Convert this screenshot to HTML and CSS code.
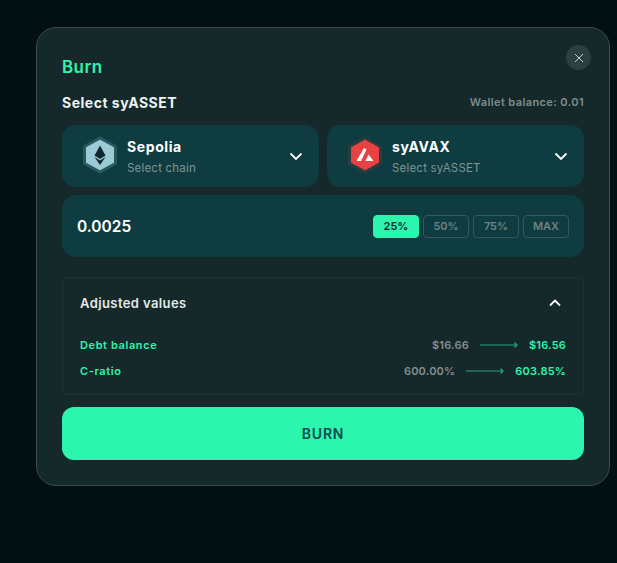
FILE: index.html
```html
<!DOCTYPE html>
<html lang="en">
<head>
	<meta charset="utf-8">
	<title>Burn</title>
	<link rel="stylesheet" href="styles.css">
</head>
<body>
	<div class="modal">
		<button class="close" type="button">
			<svg width="10" height="10" viewBox="0 0 10 10"><path d="M1 1l8 8M9 1l-8 8" stroke="#c5cdcd" stroke-width="1" fill="none"/></svg>
		</button>
		<h1 class="title">Burn</h1>

		<div class="label_row">
			<span class="label">Select syASSET</span>
			<span class="wallet">Wallet balance: 0.01</span>
		</div>

		<div class="selects">
			<div class="select">
				<svg class="token" width="36" height="38" viewBox="0 0 36 38">
					<path d="M18 2L33.500 10.500V27.500L18 36L2.500 27.500V10.500Z" fill="#9ccbd8" stroke="#2a565d" stroke-width="3" stroke-linejoin="round"/>
					<path d="M18 9.500L12.500 19.500L18 23L23.500 19.500Z" fill="#10272d"/>
					<path d="M12.500 21L18 24.500L23.500 21L18 29Z" fill="#10272d"/>
				</svg>
				<div class="select_text">
					<div class="select_name">Sepolia</div>
					<div class="select_hint">Select chain</div>
				</div>
				<svg class="chev" width="14" height="9" viewBox="0 0 14 9"><path d="M1.500 1.500L7 7L12.500 1.500" stroke="#fff" stroke-width="1.800" fill="none"/></svg>
			</div>
			<div class="select">
				<svg class="token" width="36" height="38" viewBox="0 0 36 38">
					<path d="M18 2L33.500 10.500V27.500L18 36L2.500 27.500V10.500Z" fill="#e84142" stroke="#2b3b40" stroke-width="3" stroke-linejoin="round"/>
					<path d="M17 12L19.500 13.500L14 25H9.500Z" fill="#fff"/>
					<path d="M21.500 18.500L26.500 25H18.500Z" fill="#fff"/>
				</svg>
				<div class="select_text">
					<div class="select_name">syAVAX</div>
					<div class="select_hint">Select syASSET</div>
				</div>
				<svg class="chev" width="14" height="9" viewBox="0 0 14 9"><path d="M1.500 1.500L7 7L12.500 1.500" stroke="#fff" stroke-width="1.800" fill="none"/></svg>
			</div>
		</div>

		<div class="amount">
			<span class="amount_value">0.0025</span>
			<div class="pcts">
				<span class="pct on">25%</span>
				<span class="pct">50%</span>
				<span class="pct">75%</span>
				<span class="pct">MAX</span>
			</div>
		</div>

		<div class="adjusted">
			<div class="adjusted_head">
				<span>Adjusted values</span>
				<svg width="12" height="8" viewBox="0 0 12 8"><path d="M1 6.500L6 1.500L11 6.500" stroke="#fff" stroke-width="1.800" fill="none"/></svg>
			</div>
			<div class="row">
				<span class="row_name">Debt balance</span>
				<span class="row_old">$16.66</span>
				<svg class="arrow" width="38" height="6" viewBox="0 0 38 6"><path d="M0 3H37M34.500 .5L37 3L34.500 5.500" stroke="#22a884" stroke-width="1.200" fill="none"/></svg>
				<span class="row_new">$16.56</span>
			</div>
			<div class="row">
				<span class="row_name">C-ratio</span>
				<span class="row_old">600.00%</span>
				<svg class="arrow" width="38" height="6" viewBox="0 0 38 6"><path d="M0 3H37M34.500 .5L37 3L34.500 5.500" stroke="#22a884" stroke-width="1.200" fill="none"/></svg>
				<span class="row_new">603.85%</span>
			</div>
		</div>

		<button class="burn" type="button">BURN</button>
	</div>
</body>
</html>
```

FILE: styles.css
```css
* {
	box-sizing: border-box;
}
html, body {
	height: 100%;
}
body {
	margin: 0;
	padding: 27px 0 0 36px;
	background: #021011;
	font-family: "Inter", "Liberation Sans", sans-serif;
	overflow: hidden;
}
.modal {
	position: relative;
	width: 574px;
	height: 459px;
	padding: 28px 25px 0 25px;
	background: #15292b;
	border: 1px solid #3a4b4c;
	border-radius: 20px;
}
.close {
	position: absolute;
	top: 17px;
	right: 18px;
	width: 25px;
	height: 25px;
	padding: 0;
	display: flex;
	align-items: center;
	justify-content: center;
	background: #2c3f42;
	border: 0;
	border-radius: 50%;
}
.title {
	margin: 0;
	height: 22px;
	line-height: 22px;
	font-size: 17px;
	font-weight: 600;
	letter-spacing: .4px;
	color: #2cf5ad;
}
.label_row {
	display: flex;
	justify-content: space-between;
	align-items: center;
	margin-top: 14px;
	height: 20px;
}
.label {
	font-size: 14px;
	font-weight: 700;
	letter-spacing: .5px;
	color: #eef3f3;
}
.wallet {
	font-size: 11px;
	font-weight: 600;
	letter-spacing: .4px;
	color: #7f8d8d;
}
.selects {
	display: flex;
	gap: 8px;
	margin-top: 13px;
}
.select {
	flex: 1;
	height: 62px;
	display: flex;
	align-items: center;
	padding: 0 16px 0 20px;
	background: #0f3c40;
	border-radius: 14px;
}
.token {
	flex: none;
	margin-top: -2px;
}
.select_text {
	flex: 1;
	margin-left: 9px;
}
.select_name {
	font-size: 14px;
	line-height: 18px;
	font-weight: 700;
	letter-spacing: .6px;
	color: #fff;
}
.select_hint {
	margin-top: 5px;
	font-size: 11.500px;
	line-height: 14px;
	letter-spacing: .2px;
	color: #7c9596;
}
.amount {
	display: flex;
	justify-content: space-between;
	align-items: center;
	height: 62px;
	margin-top: 8px;
	padding: 0 15px;
	background: #0f3c40;
	border-radius: 14px;
}
.amount_value {
	font-size: 15.500px;
	font-weight: 600;
	color: #fff;
}
.pcts {
	display: flex;
	gap: 4px;
}
.pct {
	width: 46px;
	height: 23px;
	line-height: 21px;
	text-align: center;
	font-size: 11px;
	font-weight: 600;
	color: #6b8384;
	border: 1px solid #37585a;
	border-radius: 4px;
}
.pct.on {
	background: #2cf5ad;
	border-color: #2cf5ad;
	color: #10292b;
}
.adjusted {
	height: 118px;
	margin-top: 20px;
	padding: 0 17px;
	border: 1px solid #1f3431;
	border-radius: 6px;
}
.adjusted_head {
	display: flex;
	justify-content: space-between;
	align-items: center;
	height: 50px;
	margin-bottom: 4px;
	padding-right: 5px;
	font-size: 13px;
	font-weight: 600;
	letter-spacing: .4px;
	color: #e3eaea;
}
.row {
	display: flex;
	align-items: center;
	height: 26px;
	font-size: 11px;
	font-weight: 600;
	letter-spacing: .2px;
}
.row_name {
	flex: 1;
	letter-spacing: .6px;
	color: #2cf5ad;
}
.row_old {
	color: #848f8f;
}
.arrow {
	margin: 0 11px;
}
.row_new {
	color: #2cf5ad;
}
.burn {
	display: block;
	width: 100%;
	height: 53px;
	margin-top: 12px;
	background: #2cf5ad;
	border: 0;
	border-radius: 12px;
	font-family: inherit;
	font-size: 14px;
	font-weight: 600;
	letter-spacing: .8px;
	color: #0e4a4d;
}
```
